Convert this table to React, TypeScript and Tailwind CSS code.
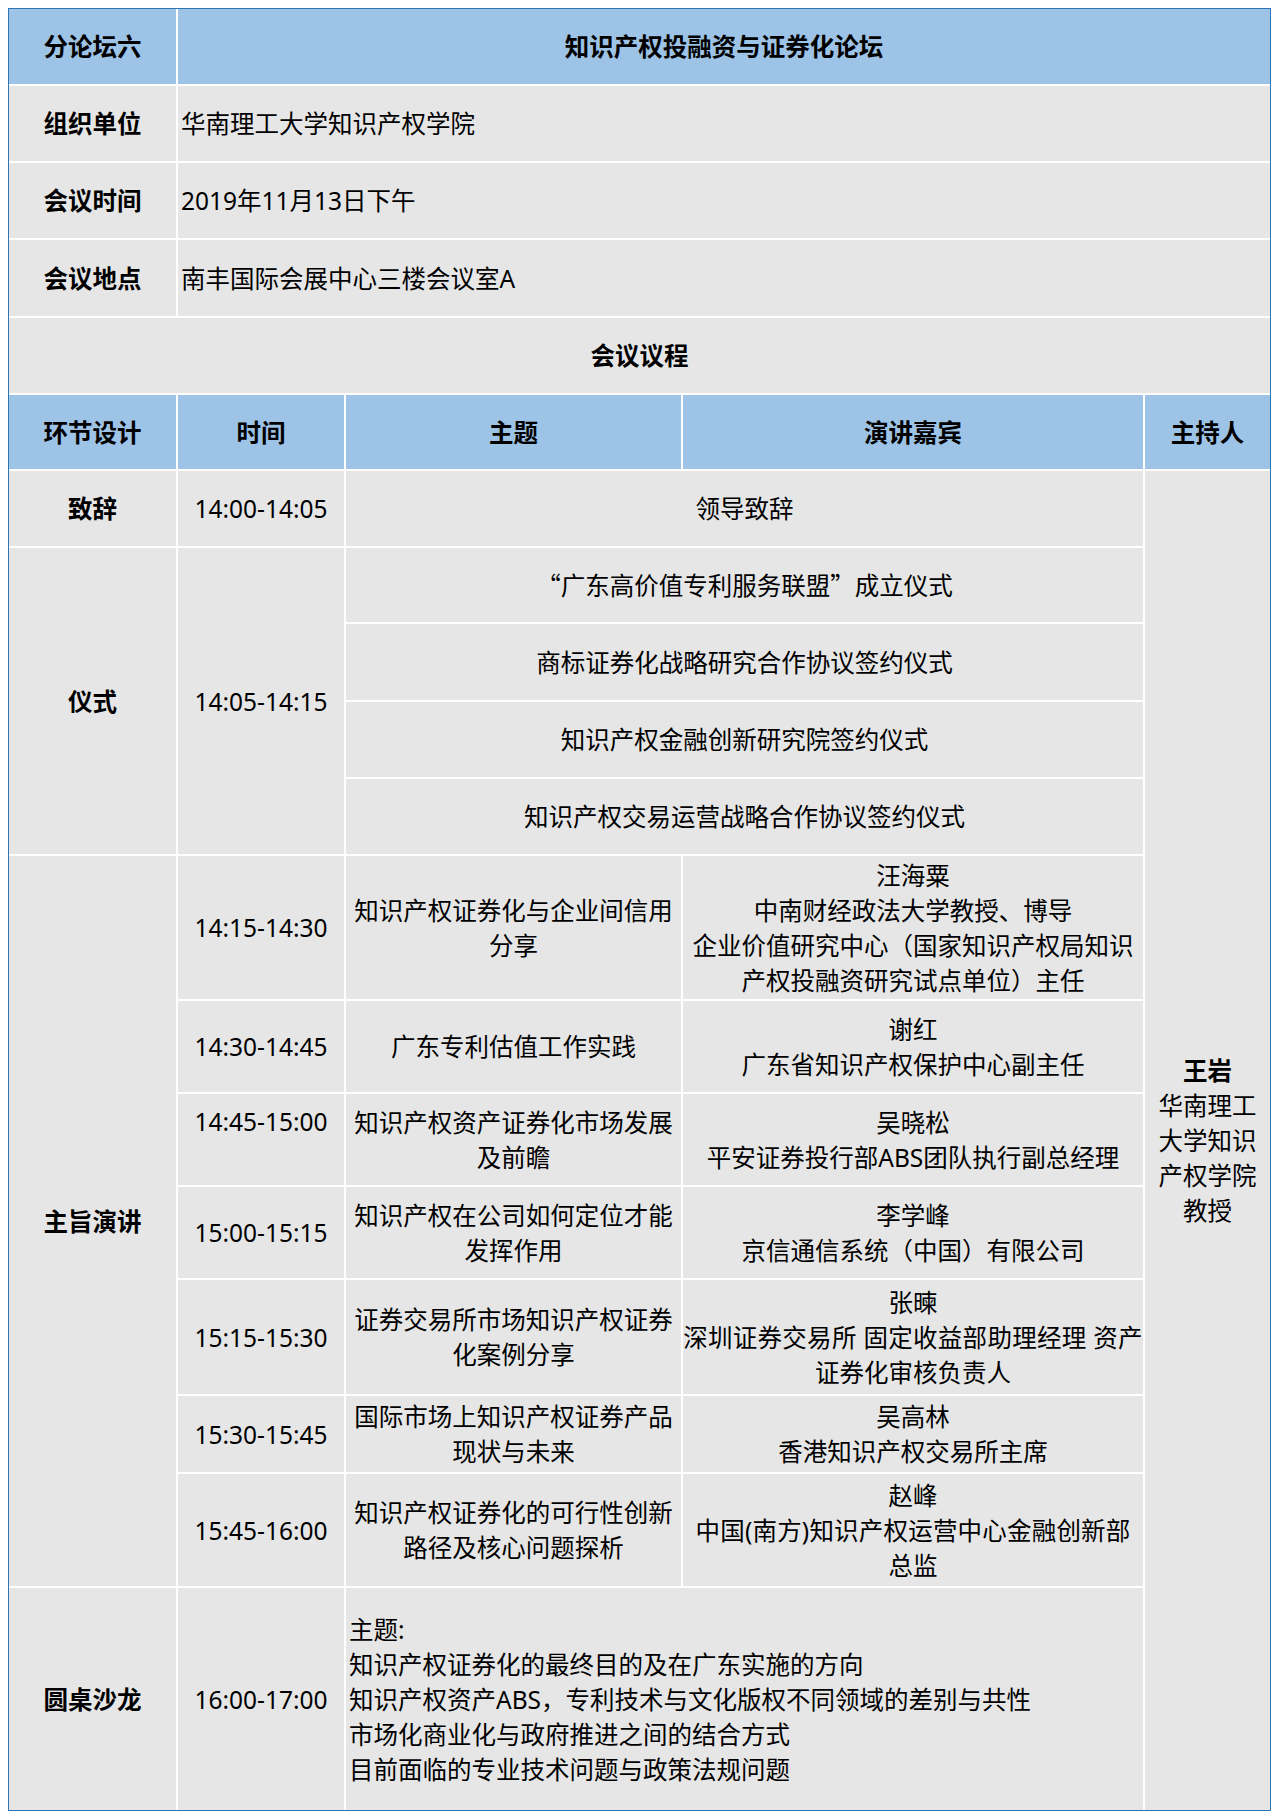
import React from "react";

type CellProps = {
  area: string;
  blue?: boolean;
  bold?: boolean;
  left?: boolean;
  top?: boolean;
  lines: React.ReactNode[];
};

function Cell({ area, blue, bold, left, top, lines }: CellProps) {
  return (
    <div
      className={`${area} flex ${top ? "items-start pt-[10px]" : "items-center"} ${
        left ? "justify-start text-left pl-[3px]" : "justify-center text-center"
      } ${blue ? "bg-[#9dc3e6]" : "bg-[#e6e6e6]"} ${bold ? "font-bold" : "font-normal"}`}
    >
      <div>
        {lines.map((l, i) => (
          <div key={i} className="whitespace-nowrap">
            {l}
          </div>
        ))}
      </div>
    </div>
  );
}

const Q = ({ c }: { c: string }) => <span className="font-['Noto_Sans_CJK_SC',sans-serif]">{c}</span>;

export default function App() {
  return (
    <div className="min-h-[1820px] w-[1280px] bg-white pt-[8px] pl-[8px] font-['Noto_Sans','Noto_Sans_CJK_SC',sans-serif] text-[24.5px] leading-[35px] text-black">
      <div className="w-[1263px] border border-[#2e75b6] bg-white">
        <div className="grid gap-[2px] grid-cols-[167px_166px_335px_460px_125px] grid-rows-[75px_75px_75px_76px_75px_74px_75px_74px_76px_75px_75px_143px_91px_91px_91px_114px_76px_112px_222px]">
          {/* Row 1 */}
          <Cell area="[grid-area:1/1/2/2]" blue bold lines={["分论坛六"]} />
          <Cell area="[grid-area:1/2/2/6]" blue bold lines={["知识产权投融资与证券化论坛"]} />
          {/* Rows 2-4 */}
          <Cell area="[grid-area:2/1/3/2]" bold lines={["组织单位"]} />
          <Cell area="[grid-area:2/2/3/6]" left lines={["华南理工大学知识产权学院"]} />
          <Cell area="[grid-area:3/1/4/2]" bold lines={["会议时间"]} />
          <Cell area="[grid-area:3/2/4/6]" left lines={["2019年11月13日下午"]} />
          <Cell area="[grid-area:4/1/5/2]" bold lines={["会议地点"]} />
          <Cell area="[grid-area:4/2/5/6]" left lines={["南丰国际会展中心三楼会议室A"]} />
          {/* Row 5 */}
          <Cell area="[grid-area:5/1/6/6]" bold lines={["会议议程"]} />
          {/* Row 6 headers */}
          <Cell area="[grid-area:6/1/7/2]" blue bold lines={["环节设计"]} />
          <Cell area="[grid-area:6/2/7/3]" blue bold lines={["时间"]} />
          <Cell area="[grid-area:6/3/7/4]" blue bold lines={["主题"]} />
          <Cell area="[grid-area:6/4/7/5]" blue bold lines={["演讲嘉宾"]} />
          <Cell area="[grid-area:6/5/7/6]" blue bold lines={["主持人"]} />
          {/* Row 7 */}
          <Cell area="[grid-area:7/1/8/2]" bold lines={["致辞"]} />
          <Cell area="[grid-area:7/2/8/3]" lines={["14:00-14:05"]} />
          <Cell area="[grid-area:7/3/8/5]" lines={["领导致辞"]} />
          {/* Host column */}
          <div className="[grid-area:7/5/20/6] flex items-center justify-center bg-[#e6e6e6] text-center">
            <div>
              <div className="font-bold">王岩</div>
              <div>华南理工</div>
              <div>大学知识</div>
              <div>产权学院</div>
              <div>教授</div>
            </div>
          </div>
          {/* Rows 8-11 仪式 */}
          <Cell area="[grid-area:8/1/12/2]" bold lines={["仪式"]} />
          <Cell area="[grid-area:8/2/12/3]" lines={["14:05-14:15"]} />
          <Cell
            area="[grid-area:8/3/9/5]"
            lines={[
              <>
                <Q c="“" />广东高价值专利服务联盟<Q c="”" />成立仪式
              </>,
            ]}
          />
          <Cell area="[grid-area:9/3/10/5]" lines={["商标证券化战略研究合作协议签约仪式"]} />
          <Cell area="[grid-area:10/3/11/5]" lines={["知识产权金融创新研究院签约仪式"]} />
          <Cell area="[grid-area:11/3/12/5]" lines={["知识产权交易运营战略合作协议签约仪式"]} />
          {/* Rows 12-18 主旨演讲 */}
          <Cell area="[grid-area:12/1/19/2]" bold lines={["主旨演讲"]} />

          <Cell area="[grid-area:12/2/13/3]" lines={["14:15-14:30"]} />
          <Cell area="[grid-area:12/3/13/4]" lines={["知识产权证券化与企业间信用", "分享"]} />
          <Cell
            area="[grid-area:12/4/13/5]"
            lines={[
              "汪海粟",
              "中南财经政法大学教授、博导",
              <span className="tracking-[0px]">企业价值研究中心（国家知识产权局知识</span>,
              "产权投融资研究试点单位）主任",
            ]}
          />

          <Cell area="[grid-area:13/2/14/3]" lines={["14:30-14:45"]} />
          <Cell area="[grid-area:13/3/14/4]" lines={["广东专利估值工作实践"]} />
          <Cell area="[grid-area:13/4/14/5]" lines={["谢红", "广东省知识产权保护中心副主任"]} />

          <Cell area="[grid-area:14/2/15/3]" top lines={["14:45-15:00"]} />
          <Cell area="[grid-area:14/3/15/4]" lines={["知识产权资产证券化市场发展", "及前瞻"]} />
          <Cell
            area="[grid-area:14/4/15/5]"
            lines={["吴晓松", <span className="tracking-[0px]">平安证券投行部ABS团队执行副总经理</span>]}
          />

          <Cell area="[grid-area:15/2/16/3]" lines={["15:00-15:15"]} />
          <Cell area="[grid-area:15/3/16/4]" lines={["知识产权在公司如何定位才能", "发挥作用"]} />
          <Cell area="[grid-area:15/4/16/5]" lines={["李学峰", "京信通信系统（中国）有限公司"]} />

          <Cell area="[grid-area:16/2/17/3]" lines={["15:15-15:30"]} />
          <Cell area="[grid-area:16/3/17/4]" lines={["证券交易所市场知识产权证券", "化案例分享"]} />
          <Cell
            area="[grid-area:16/4/17/5]"
            lines={[
              "张暕",
              <span className="tracking-[0.3px]">深圳证券交易所 固定收益部助理经理 资产</span>,
              "证券化审核负责人",
            ]}
          />

          <Cell area="[grid-area:17/2/18/3]" lines={["15:30-15:45"]} />
          <Cell area="[grid-area:17/3/18/4]" lines={["国际市场上知识产权证券产品", "现状与未来"]} />
          <Cell area="[grid-area:17/4/18/5]" lines={["吴高林", "香港知识产权交易所主席"]} />

          <Cell area="[grid-area:18/2/19/3]" lines={["15:45-16:00"]} />
          <Cell area="[grid-area:18/3/19/4]" lines={["知识产权证券化的可行性创新", "路径及核心问题探析"]} />
          <Cell
            area="[grid-area:18/4/19/5]"
            lines={["赵峰", <span className="tracking-[0.2px]">中国(南方)知识产权运营中心金融创新部</span>, "总监"]}
          />
          {/* Row 19 圆桌沙龙 */}
          <Cell area="[grid-area:19/1/20/2]" bold lines={["圆桌沙龙"]} />
          <Cell area="[grid-area:19/2/20/3]" lines={["16:00-17:00"]} />
          <Cell
            area="[grid-area:19/3/20/5]"
            left
            lines={[
              "主题:",
              "知识产权证券化的最终目的及在广东实施的方向",
              "知识产权资产ABS，专利技术与文化版权不同领域的差别与共性",
              "市场化商业化与政府推进之间的结合方式",
              "目前面临的专业技术问题与政策法规问题",
            ]}
          />
        </div>
      </div>
    </div>
  );
}
